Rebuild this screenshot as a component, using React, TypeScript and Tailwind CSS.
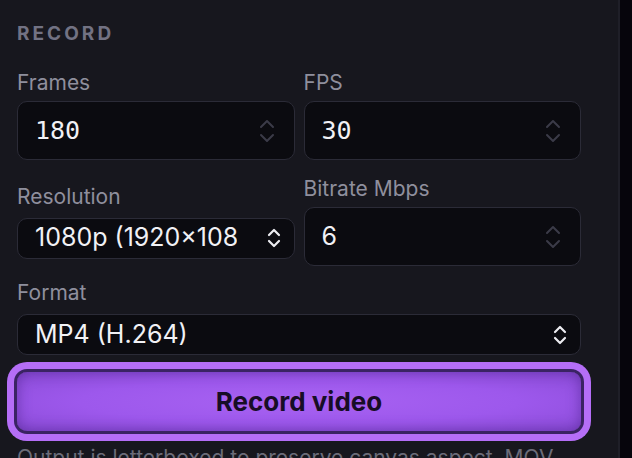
import React from "react";

const sans = "font-['Inter','Liberation_Sans',sans-serif]";
const mono = "font-['DejaVu_Sans_Mono','Liberation_Mono',monospace]";

const Spinner = () => (
  <svg width="18" height="26" viewBox="0 0 18 26" fill="none" stroke="#3b3b48" strokeWidth="2" strokeLinecap="round" strokeLinejoin="round">
    <path d="M3 9 L9 3 L15 9" />
    <path d="M3 17 L9 23 L15 17" />
  </svg>
);

const SelectArrows = () => (
  <svg width="14" height="20" viewBox="0 0 14 20" fill="none" stroke="#ececf1" strokeWidth="2.2" strokeLinecap="round" strokeLinejoin="round">
    <path d="M2 7 L7 2 L12 7" />
    <path d="M2 13 L7 18 L12 13" />
  </svg>
);

const NumberField = ({ label, value, isMono }: { label: string; value: string; isMono?: boolean }) => (
  <div className="flex flex-col gap-[5px]">
    <span className="text-[21px] leading-[26px] text-[#8f8f9d]">{label}</span>
    <div className="flex h-[59px] items-center justify-between rounded-[10px] border border-[#2b2b37] bg-[#0b0b10] pl-[17px] pr-[18px]">
      <span className={`${isMono ? mono : ""} text-[25px] text-[#f1f1f5]`}>{value}</span>
      <Spinner />
    </div>
  </div>
);

const SelectField = ({ label, value }: { label: string; value: string }) => (
  <div className="flex flex-col gap-[8px]">
    <span className="text-[21px] leading-[26px] text-[#8f8f9d]">{label}</span>
    <div className="flex h-[41px] items-center gap-[30px] rounded-[10px] border border-[#2b2b37] bg-[#0b0b10] pl-[17px] pr-[13px]">
      <span className="min-w-0 flex-1 overflow-hidden whitespace-nowrap text-[25px] text-[#f1f1f5]">{value}</span>
      <SelectArrows />
    </div>
  </div>
);

export default function App() {
  return (
    <div className={`${sans} flex h-[458px] w-[632px] items-start overflow-hidden bg-[#06050c]`}>
      <div className="flex min-h-[458px] w-[620px] shrink-0 flex-col border-r-2 border-[#1f1f28] bg-[#17171e] pl-[17px] pr-[37px] pt-[22px]">
        <h2 className="text-[19px] font-bold leading-[23px] tracking-[0.16em] text-[#727283]">RECORD</h2>

        <div className="mt-[25px] grid grid-cols-2 items-center gap-x-[9px] gap-y-[16px]">
          <NumberField label="Frames" value="180" isMono />
          <NumberField label="FPS" value="30" isMono />
          <SelectField label="Resolution" value="1080p (1920×1080)" />
          <NumberField label="Bitrate Mbps" value="6" />
        </div>

        <div className="mt-[14px]">
          <SelectField label="Format" value="MP4 (H.264)" />
        </div>

        <button className="mt-[17px] h-[59px] w-full shrink-0 rounded-[10px] bg-[radial-gradient(ellipse_at_center,#a862f2_0%,#9d58ec_55%,#8a4bd6_100%)] text-[26px] font-bold text-[#170d26] shadow-[inset_0_0_14px_rgba(70,30,130,0.55),0_0_0_3px_#3a2363,0_0_0_10px_#b56ef7]">
          Record video
        </button>

        <p className="mt-[14px] whitespace-nowrap text-[21px] leading-[26px] text-[#6c6c79]">
          Output is letterboxed to preserve canvas aspect. MOV
        </p>
      </div>
    </div>
  );
}
